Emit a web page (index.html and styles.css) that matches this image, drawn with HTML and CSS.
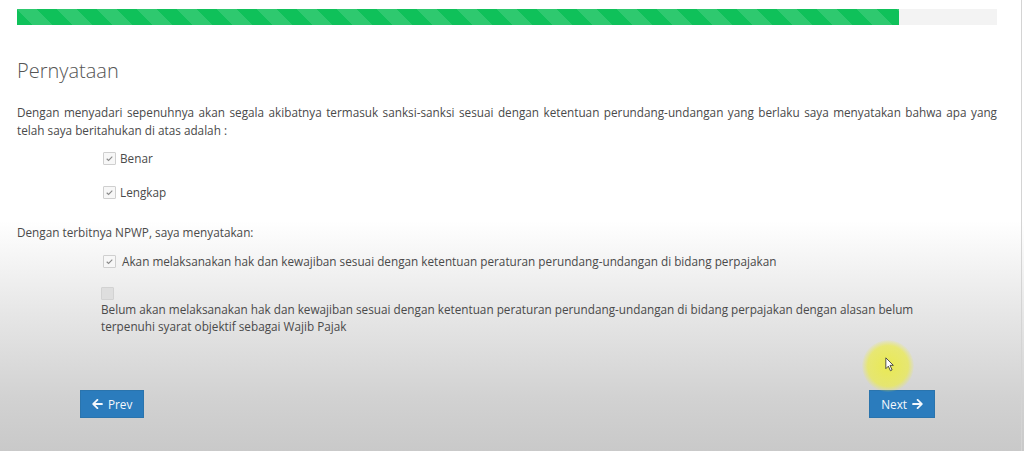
FILE: index.html
```html
<!DOCTYPE html>
<html lang="id">
<head>
    <meta charset="UTF-8" />
    <meta name="viewport" content="width=device-width, initial-scale=1.0"/>
    <title>Pernyataan</title>
    <link rel="stylesheet" href="styles.css">
</head>
<body>
<div class="page">
    <div class="progress">
        <div class="progress-bar" style="width: 90%;"></div>
    </div>

    <h3 class="judul">Pernyataan</h3>

    <p class="teks">Dengan menyadari sepenuhnya akan segala akibatnya termasuk sanksi-sanksi sesuai dengan ketentuan perundang-undangan yang berlaku saya menyatakan bahwa apa yang telah saya beritahukan di atas adalah :</p>

    <div class="pilihan">
        <label class="cek">
            <span class="kotak"><svg viewBox="0 0 13 13"><path d="M3.2 6.8 L5.4 8.8 L9.8 4.4" /></svg></span>
            Benar
        </label>
        <label class="cek">
            <span class="kotak"><svg viewBox="0 0 13 13"><path d="M3.2 6.8 L5.4 8.8 L9.8 4.4" /></svg></span>
            Lengkap
        </label>
    </div>

    <p class="teks npwp">Dengan terbitnya NPWP, saya menyatakan:</p>

    <div class="pilihan pilihan-npwp">
        <label class="cek cek-lebar">
            <span class="kotak"><svg viewBox="0 0 13 13"><path d="M3.2 6.8 L5.4 8.8 L9.8 4.4" /></svg></span>
            Akan melaksanakan hak dan kewajiban sesuai dengan ketentuan peraturan perundang-undangan di bidang perpajakan
        </label>
        <label class="cek-blok">
            <span class="kotak kosong"></span>
            <span class="label-blok">Belum akan melaksanakan hak dan kewajiban sesuai dengan ketentuan peraturan perundang-undangan di bidang perpajakan dengan alasan belum terpenuhi syarat objektif sebagai Wajib Pajak</span>
        </label>
    </div>

    <div class="navigasi">
        <button class="btn">
            <svg class="ikon" viewBox="0 0 448 512"><path d="M257.5 445.1l-22.2 22.2c-9.4 9.4-24.6 9.4-33.9 0L7 273c-9.4-9.4-9.4-24.6 0-33.9L201.4 44.7c9.4-9.4 24.600-9.4 33.9 0l22.2 22.2c9.5 9.5 9.3 25-.4 34.3L136.6 216H424c13.3 0 24 10.7 24 24v32c0 13.3-10.7 24-24 24H136.6l120.5 114.8c9.8 9.3 10 24.8.4 34.3z"/></svg>
            Prev
        </button>
        <button class="btn">
            Next
            <svg class="ikon" viewBox="0 0 448 512"><path d="M190.5 66.9l22.2-22.2c9.4-9.4 24.6-9.4 33.9 0L441 239c9.4 9.4 9.4 24.6 0 33.9L246.6 467.3c-9.4 9.4-24.6 9.4-33.900 0l-22.2-22.2c-9.5-9.5-9.3-25 .4-34.3L311.4 296H24c-13.3 0-24-10.7-24-24v-32c0-13.3 10.7-24 24-24h287.4L190.9 101.2c-9.8-9.3-10-24.8-.4-34.3z"/></svg>
        </button>
    </div>

    <div class="sorot"></div>
    <svg class="kursor" viewBox="0 0 12 18"><path d="M1 1 L1 14 L4 11 L6.5 16.5 L8.5 15.5 L6 10 L10 10 Z"/></svg>
</div>
</body>
</html>
```

FILE: styles.css
```css
body {
    margin: 0;
    font-family: "Open Sans", Arial, sans-serif;
    font-size: 11.75px;
    color: #4a4a4a;
    background: linear-gradient(to bottom, #fff 0, #fff 49%, #e8e8e8 68%, #d2d2d2 88%, #c9c9c9 100%);
}

.page {
    position: relative;
    box-sizing: border-box;
    width: 1022px;
    height: 451px;
    padding: 9px 24px 0 17px;
    border-right: 1px solid #d4d4d4;
}

.progress {
    height: 16px;
    background-color: #f3f3f3;
    overflow: hidden;
}

.progress-bar {
    height: 100%;
    background-color: #0fc15a;
    background-image: linear-gradient(45deg, rgba(255,255,255,.13) 25%, transparent 25%, transparent 50%, rgba(255,255,255,.13) 50%, rgba(255,255,255,.13) 75%, transparent 75%, transparent);
    background-size: 40px 40px;
}

.judul {
    margin: 34px 0 0;
    font-size: 20px;
    font-weight: 300;
    line-height: 23px;
    color: #555;
}

.teks {
    margin: 21px 0 0;
    line-height: 18px;
    text-align: justify;
}

.pilihan {
    display: flex;
    flex-direction: column;
    gap: 16px;
    margin-top: 10px;
    padding-left: 86px;
}

.cek {
    display: flex;
    align-items: center;
    gap: 4px;
    height: 18px;
}

.cek-lebar {
    gap: 6px;
}

.kotak {
    box-sizing: border-box;
    width: 13px;
    height: 13px;
    border: 1px solid #cfcfcf;
    border-radius: 1px;
    background-color: #f7f7f7;
    flex: none;
}

.kotak svg {
    display: block;
    width: 11px;
    height: 11px;
    fill: none;
    stroke: #8a8a8a;
    stroke-width: 1.3;
}

.kosong {
    background-color: #dedede;
    border-color: #d2d2d2;
}

.npwp {
    margin-top: 22px;
}

.pilihan-npwp {
    margin-top: 11px;
    gap: 17px;
    padding-left: 84px;
}

.pilihan-npwp .cek {
    padding-left: 2px;
}

.cek-blok {
    display: flex;
    flex-direction: column;
    gap: 1px;
    width: 830px;
    line-height: 17px;
}

.navigasi {
    display: flex;
    justify-content: space-between;
    margin-top: 55px;
    padding: 0 62px 0 63px;
}

.btn {
    display: flex;
    align-items: center;
    gap: 5px;
    height: 28px;
    padding: 0 11px;
    border: 1px solid #2a74ad;
    border-radius: 0;
    background-color: #2b7cbd;
    color: #f4f8fc;
    font-family: "Open Sans", Arial, sans-serif;
    font-size: 11.75px;
    cursor: pointer;
}

.ikon {
    width: 11px;
    height: 12px;
    fill: #f4f8fc;
}

.sorot {
    position: absolute;
    left: 862px;
    top: 340px;
    width: 52px;
    height: 52px;
    border-radius: 50%;
    background: radial-gradient(circle, rgba(236,236,60,.85) 0, rgba(236,236,70,.7) 55%, rgba(236,236,90,0) 72%);
}

.kursor {
    position: absolute;
    left: 885px;
    top: 357px;
    width: 10px;
    height: 15px;
    fill: #fff;
    stroke: #333;
    stroke-width: 1;
}
```
